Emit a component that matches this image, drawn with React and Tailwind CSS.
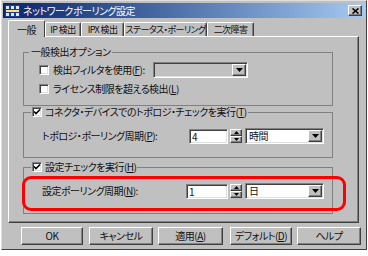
import React from 'react'

const raised = "bg-[#c0c0c0] border border-t-[#ffffff] border-l-[#ffffff] border-r-[#404040] border-b-[#404040] shadow-[inset_-1px_-1px_0_#808080]"
const sunken = "border border-t-[#808080] border-l-[#808080] border-r-[#ffffff] border-b-[#ffffff] shadow-[inset_1px_1px_0_#404040,inset_-1px_-1px_0_#dfdfdf]"

function Check({ checked }) {
  return (
    <div className={"w-[10px] h-[10px] bg-white flex items-center justify-center shrink-0 " + sunken}>
      {checked && (
        <svg width="8" height="8" viewBox="0 0 8 8">
          <polyline points="1,3.5 3,5.5 7,1.5" fill="none" stroke="#000" strokeWidth="1.6" />
        </svg>
      )}
    </div>
  )
}

function DropBtn() {
  return (
    <div className={"w-[14px] h-full flex items-center justify-center " + raised}>
      <svg width="7" height="4" viewBox="0 0 7 4">
        <polygon points="0,0 7,0 3.5,4" fill="#000" />
      </svg>
    </div>
  )
}

function Combo({ value, w, h = 16, disabled }) {
  return (
    <div className={"flex items-stretch p-[1px] " + sunken + (disabled ? " bg-[#c0c0c0]" : " bg-white")} style={{ width: w, height: h }}>
      <div className="flex-1 pl-[2px] leading-[12px] flex items-center">{value}</div>
      <DropBtn />
    </div>
  )
}

function Spinner() {
  return (
    <div className="w-[12px] h-[14px] flex flex-col">
      <div className={"flex-1 flex items-center justify-center " + raised}>
        <svg width="5" height="3" viewBox="0 0 5 3"><polygon points="0,3 5,3 2.5,0" fill="#000" /></svg>
      </div>
      <div className={"flex-1 flex items-center justify-center " + raised}>
        <svg width="5" height="3" viewBox="0 0 5 3"><polygon points="0,0 5,0 2.5,3" fill="#000" /></svg>
      </div>
    </div>
  )
}

function PeriodRow({ label, num, unit, labelW, numW }) {
  return (
    <div className="flex items-center">
      <div className="pl-[18px] leading-[12px]" style={{ width: labelW }}>{label}</div>
      <div className={"h-[15px] bg-white pl-[2px] leading-[13px] " + sunken} style={{ width: numW }}>{num}</div>
      <div className="ml-[2px]"><Spinner /></div>
      <div className="ml-[3px]"><Combo value={unit} w={79} /></div>
    </div>
  )
}

function Tab({ label, w, active }) {
  if (active) {
    return (
      <div className="relative z-10 -ml-[2px] h-[17px] bg-[#c0c0c0] border-t border-l border-r border-t-white border-l-white border-r-[#404040] rounded-t-[2px] flex items-center justify-center" style={{ width: w }}>
        <span className="leading-[12px] mt-[1px]">{label}</span>
      </div>
    )
  }
  return (
    <div className="h-[15px] overflow-hidden border-t border-l border-r border-t-white border-l-white border-r-[#404040] rounded-t-[2px] flex items-center justify-center shadow-[inset_-1px_0_0_#808080] text-[9px] tracking-[-0.6px]" style={{ width: w }}>
      <span className="leading-[12px]">{label}</span>
    </div>
  )
}

function Button({ label, w, ml }) {
  return (
    <div className={"h-[18px] flex items-center justify-center " + raised} style={{ width: w, marginLeft: ml }}>
      <span className="leading-[12px]">{label}</span>
    </div>
  )
}

export default function App() {
  return (
    <div className="w-[368px] h-[256px] bg-white overflow-hidden whitespace-nowrap text-[10px] tracking-[-0.5px] text-[#101010] font-['Noto_Sans_CJK_JP',sans-serif] [font-feature-settings:'palt']">
      <div className="ml-[1px] w-[366px] h-[250px] bg-[#c0c0c0] border border-t-[#dfdfdf] border-l-[#dfdfdf] border-r-[#404040] border-b-[#404040] pt-[2px] px-[1px] flex flex-col">
        {/* title bar */}
        <div className="h-[15px] bg-gradient-to-r from-[#0a246a] to-[#a6caf0] flex items-center">
          <svg className="ml-[2px]" width="15" height="12" viewBox="0 0 15 12">
            <rect x="0" y="0" width="15" height="12" fill="#1c3c8c" />
            <rect x="1" y="1" width="3" height="3" fill="#e0e8ff" />
            <rect x="6" y="1" width="3" height="3" fill="#e0e8ff" />
            <rect x="11" y="1" width="3" height="3" fill="#e0e8ff" />
            <rect x="1" y="5" width="13" height="2" fill="#ffe080" />
            <rect x="1" y="8" width="3" height="3" fill="#e0e8ff" />
            <rect x="6" y="8" width="3" height="3" fill="#e0e8ff" />
            <rect x="11" y="8" width="3" height="3" fill="#e0e8ff" />
          </svg>
          <span className="ml-[3px] text-white leading-[12px]">ネットワークポーリング設定</span>
          <div className={"ml-auto mr-[3px] w-[14px] h-[11px] flex items-center justify-center " + raised}>
            <svg width="7" height="6" viewBox="0 0 7 6">
              <path d="M0.5 0.5 L6.5 5.5 M6.5 0.5 L0.5 5.5" stroke="#000" strokeWidth="1.6" />
            </svg>
          </div>
        </div>

        {/* tabs */}
        <div className="mt-[2px] pl-[7px] h-[17px] flex items-end">
          <Tab label="一般" w={37} active />
          <Tab label="IP 検出" w={36} />
          <Tab label="IPX 検出" w={43} />
          <Tab label="ステータス・ポーリング" w={83} />
          <Tab label="二次障害" w={47} />
        </div>

        {/* panel */}
        <div className="relative -mt-[1px] ml-[5px] w-[351px] h-[187px] border border-t-white border-l-white border-r-[#404040] border-b-[#404040] shadow-[inset_-1px_-1px_0_#808080] pl-[14px]">
          <fieldset className="mt-[9px] w-[310px] h-[60px] border border-[#808080] px-0">
            <legend className="ml-[5px] px-[2px] leading-[12px]">一般検出オプション</legend>
            <div className="flex items-center mt-[4px] pl-[15px]">
              <Check />
              <span className="ml-[4px] w-[100px] leading-[12px]">検出フィルタを使用(<span className="underline">F</span>):</span>
              <Combo w={95} h={16} disabled />
            </div>
            <div className="flex items-center mt-[5px] pl-[15px]">
              <Check />
              <span className="ml-[4px] leading-[12px]">ライセンス制限を超える検出(<span className="underline">L</span>)</span>
            </div>
          </fieldset>

          <fieldset className="w-[310px] h-[52px] border border-[#808080] px-0">
            <legend className="ml-[7px] px-[1px] flex items-center leading-[12px]">
              <Check checked />
              <span className="ml-[3px]">コネクタ・デバイスでのトポロジ・チェックを実行(<span className="underline">T</span>)</span>
            </legend>
            <div className="mt-[10px]">
              <PeriodRow label={<>トポロジ・ポーリング周期(<span className="underline">P</span>):</>} num="4" unit="時間" labelW={165} numW={39} />
            </div>
          </fieldset>

          <fieldset className="mt-[3px] w-[310px] h-[53px] border border-[#808080] px-0">
            <legend className="ml-[7px] px-[1px] flex items-center leading-[12px]">
              <Check checked />
              <span className="ml-[3px]">設定チェックを実行(<span className="underline">H</span>)</span>
            </legend>
            <div className="mt-[10px]">
              <PeriodRow label={<>設定ポーリング周期(<span className="underline">N</span>):</>} num="1" unit="日" labelW={162} numW={42} />
            </div>
          </fieldset>

          {/* red annotation */}
          <div className="absolute left-[13px] top-[139px] w-[324px] h-[35px] border-[3px] border-[#ff0000] rounded-[9px]" />
        </div>

        {/* buttons */}
        <div className="mt-[4px] flex">
          <Button label="OK" w={62} ml={18} />
          <Button label="キャンセル" w={64} ml={6} />
          <Button label={<>適用(<span className="underline">A</span>)</>} w={65} ml={5} />
          <Button label={<>デフォルト(<span className="underline">D</span>)</>} w={62} ml={7} />
          <Button label="ヘルプ" w={64} ml={5} />
        </div>
      </div>
    </div>
  )
}
